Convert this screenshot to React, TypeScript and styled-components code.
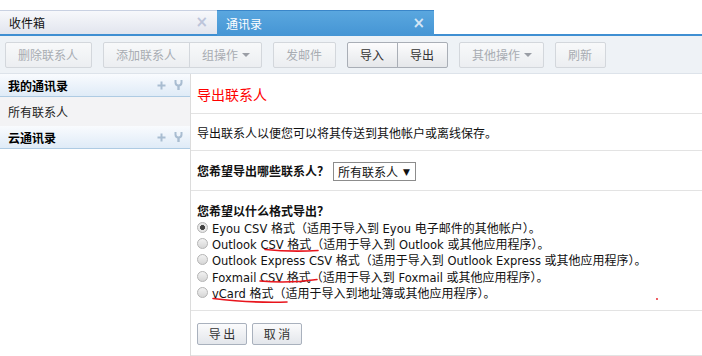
import styled, { createGlobalStyle } from "styled-components"

const GlobalStyle = createGlobalStyle`
    html, body {
        margin: 0;
        padding: 0;
        background: #ffffff;
    }
    body {
        font-family: "Noto Sans CJK SC", sans-serif;
        font-size: 12px;
        color: #333333;
    }
`

interface TabProps {
    $active?: boolean
}

interface BtnProps {
    $enabled?: boolean
    $first?: boolean
    $last?: boolean
}

interface Format {
    name: string
    target?: string
    rest: string
}

const formats: Format[] = [
    { name: "Eyou CSV", target: "Eyou", rest: "电子邮件的其他帐户）。" },
    { name: "Outlook CSV", target: "Outlook", rest: "或其他应用程序）。" },
    { name: "Outlook Express CSV", target: "Outlook Express", rest: "或其他应用程序）。" },
    { name: "Foxmail CSV", target: "Foxmail", rest: "或其他应用程序）。" },
    { name: "vCard", rest: "地址簿或其他应用程序）。" },
]

function PlusIcon() {
    return (
        <svg width="9" height="9" viewBox="0 0 9 9">
            <path d="M4.5 0.5 V8.5 M0.5 4.5 H8.5" stroke="#a9bdd1" strokeWidth="2" fill="none" />
        </svg>
    )
}

function WrenchIcon() {
    return (
        <svg width="9" height="10" viewBox="0 0 9 10">
            <path d="M1.5 0 V2.5 A3 3 0 0 0 7.5 2.5 V0" stroke="#a9bdd1" strokeWidth="2" fill="none" />
            <path d="M4.5 5 V10" stroke="#a9bdd1" strokeWidth="2.4" fill="none" />
        </svg>
    )
}

function GroupHeader({ title }: { title: string }) {
    return (
        <SideHeader>
            <span>{title}</span>
            <HeaderIcons>
                <PlusIcon />
                <WrenchIcon />
            </HeaderIcons>
        </SideHeader>
    )
}

function App() {
    return (
        <>
            <GlobalStyle />
            <Page>
                <TabBar>
                    <Tab>
                        收件箱<Close>×</Close>
                    </Tab>
                    <Tab $active>
                        通讯录<Close $active>×</Close>
                    </Tab>
                </TabBar>

                <Toolbar>
                    <Btn $first $last>删除联系人</Btn>
                    <Group>
                        <Btn $first>添加联系人</Btn>
                        <MenuBtn $last>
                            组操作<Caret />
                        </MenuBtn>
                    </Group>
                    <Btn $first $last>发邮件</Btn>
                    <Group>
                        <Btn $enabled $first>导入</Btn>
                        <Btn $enabled $last>导出</Btn>
                    </Group>
                    <MenuBtn $first $last>
                        其他操作<Caret />
                    </MenuBtn>
                    <Btn $first $last>刷新</Btn>
                </Toolbar>

                <Body>
                    <Sidebar>
                        <GroupHeader title="我的通讯录" />
                        <SideItem>所有联系人</SideItem>
                        <GroupHeader title="云通讯录" />
                    </Sidebar>

                    <Main>
                        <TitleSection>导出联系人</TitleSection>
                        <DescSection>导出联系人以便您可以将其传送到其他帐户或离线保存。</DescSection>
                        <PickSection>
                            <Label>您希望导出哪些联系人？</Label>
                            <Select>
                                所有联系人<SelectArrow>▼</SelectArrow>
                            </Select>
                        </PickSection>
                        <FormatSection>
                            <Label>您希望以什么格式导出？</Label>
                            {formats.map((f, i) => (
                                <Option key={f.name}>
                                    <Radio $checked={i === 0} />
                                    <span>
                                        <Latin>{f.name} </Latin>
                                        格式（适用于导入到
                                        {f.target && <Latin> {f.target} </Latin>}
                                        {f.rest}
                                    </span>
                                </Option>
                            ))}
                        </FormatSection>
                        <ActionSection>
                            <ActionBtn>导 出</ActionBtn>
                            <ActionBtn>取 消</ActionBtn>
                        </ActionSection>
                    </Main>
                </Body>

                <Marks width="702" height="356" viewBox="0 0 702 356">
                    <path d="M265 249.5 C280 251, 300 251.5, 318 250.5" stroke="#e8141c" strokeWidth="1.6" fill="none" strokeLinecap="round" />
                    <path d="M260 281 C276 282.5, 300 282, 317 279.5" stroke="#e8141c" strokeWidth="1.6" fill="none" strokeLinecap="round" />
                    <path d="M213 298.5 C235 301, 262 303, 287 302" stroke="#e8141c" strokeWidth="1.6" fill="none" strokeLinecap="round" />
                    <circle cx="657" cy="299" r="0.9" fill="#e8141c" />
                </Marks>
            </Page>
        </>
    )
}

export default App

const Page = styled.div`
    position: relative;
    width: 702px;
    height: 356px;
    overflow: hidden;
    background: #ffffff;
`

const TabBar = styled.div`
    height: 24px;
    padding-top: 10px;
    display: flex;
    align-items: stretch;
    border-bottom: 2px solid #3f8fd2;
`

const Tab = styled.div<TabProps>`
    width: 217px;
    box-sizing: border-box;
    display: flex;
    align-items: center;
    justify-content: space-between;
    padding: 0 9px;
    font-size: 12px;
    border-top: 1px solid ${(p) => (p.$active ? "#3a86c9" : "#c9d1e2")};
    color: ${(p) => (p.$active ? "#ffffff" : "#111111")};
    background: ${(p) =>
        p.$active
            ? "linear-gradient(#5aa7df, #4595d4)"
            : "linear-gradient(#f7f8fb, #e2e5ee)"};
    margin-bottom: ${(p) => (p.$active ? "-2px" : "0")};
`

const Close = styled.span<TabProps>`
    font-size: 15px;
    font-weight: bold;
    font-family: "DejaVu Sans", sans-serif;
    line-height: 1;
    color: ${(p) => (p.$active ? "#d5e6f5" : "#bcc4da")};
`

const Toolbar = styled.div`
    height: 37px;
    display: flex;
    align-items: center;
    gap: 11px;
    padding-left: 5px;
    background: #eef2f6;
    border-bottom: 1px solid #dde3ea;
`

const Group = styled.div`
    display: flex;
`

const Btn = styled.div<BtnProps>`
    height: 24px;
    padding: 0 13px 0 12px;
    display: flex;
    align-items: center;
    gap: 4px;
    font-size: 12px;
    color: ${(p) => (p.$enabled ? "#333333" : "#a8acb2")};
    border: 1px solid ${(p) => (p.$enabled ? "#a9aeb6" : "#d3d7dc")};
    background: ${(p) =>
        p.$enabled
            ? "linear-gradient(#fcfcfd, #e5e7ea)"
            : "linear-gradient(#f8f9fa, #eceef1)"};
    border-radius: ${(p) =>
        `${p.$first ? "2px" : "0"} ${p.$last ? "2px" : "0"} ${p.$last ? "2px" : "0"} ${p.$first ? "2px" : "0"}`};
    margin-left: ${(p) => (p.$first ? "0" : "-1px")};
`

const MenuBtn = styled(Btn)`
    padding: 0 11px 0 12px;
`

const Caret = styled.span`
    width: 0;
    height: 0;
    border-left: 4px solid transparent;
    border-right: 4px solid transparent;
    border-top: 4px solid #9a9ea5;
`

const Body = styled.div`
    display: flex;
    height: 282px;
`

const Sidebar = styled.div`
    width: 190px;
    border-right: 1px solid #dcdcdc;
`

const SideHeader = styled.div`
    height: 22px;
    display: flex;
    align-items: center;
    justify-content: space-between;
    padding: 0 8px;
    font-weight: bold;
    color: #000000;
    background: linear-gradient(#f9fbfe, #dfebf7);
    border-bottom: 1px solid #aecbe3;
`

const HeaderIcons = styled.div`
    display: flex;
    align-items: center;
    gap: 8px;
    margin-right: -1px;
`

const SideItem = styled.div`
    height: 29px;
    display: flex;
    align-items: center;
    padding-left: 8px;
    color: #222222;
    background: #f3f3f5;
`

const Main = styled.div`
    flex: 1;
`

const Section = styled.div`
    padding-left: 6px;
    border-bottom: 1px solid #e3e3e3;
`

const TitleSection = styled(Section)`
    height: 38px;
    display: flex;
    align-items: center;
    font-size: 14px;
    color: #ff0000;
    padding-top: 1px;
`

const DescSection = styled(Section)`
    height: 36px;
    display: flex;
    align-items: center;
    color: #111111;
`

const PickSection = styled(Section)`
    height: 39px;
    display: flex;
    align-items: center;
    gap: 4px;
`

const Label = styled.div`
    font-weight: bold;
    color: #111111;
    line-height: 16px;
`

const Select = styled.div`
    width: 83px;
    height: 19px;
    box-sizing: border-box;
    border: 1px solid #8c8c8c;
    display: flex;
    align-items: center;
    justify-content: space-between;
    padding: 0 5px 0 4px;
    color: #111111;
    margin-top: 2px;
`

const SelectArrow = styled.span`
    font-size: 9px;
    font-family: "DejaVu Sans", sans-serif;
    color: #111111;
`

const FormatSection = styled(Section)`
    padding-top: 12px;
    padding-bottom: 10px;
`

const Option = styled.div`
    height: 16.3px;
    display: flex;
    align-items: center;
    gap: 4px;
    color: #111111;
    white-space: pre;
`

const Latin = styled.span`
    font-family: "DejaVu Sans", sans-serif;
    font-size: 11.5px;
`

const Radio = styled.span<{ $checked?: boolean }>`
    width: 11px;
    height: 11px;
    border-radius: 50%;
    box-sizing: border-box;
    border: 1px solid #b4b4b4;
    background: ${(p) =>
        p.$checked
            ? "radial-gradient(circle, #444 0 2.2px, #e6e6e6 2.8px)"
            : "linear-gradient(#f2f2f2, #d6d6d6)"};
    flex-shrink: 0;
`

const ActionSection = styled(Section)`
    height: 43px;
    display: flex;
    align-items: center;
    gap: 5px;
    padding-top: 1px;
`

const ActionBtn = styled.div`
    width: 50px;
    height: 22px;
    box-sizing: border-box;
    display: flex;
    align-items: center;
    justify-content: center;
    color: #333333;
    border: 1px solid #a9b1bd;
    border-radius: 2px;
    background: linear-gradient(#fbfbfc, #e3e6eb);
`

const Marks = styled.svg`
    position: absolute;
    left: 0;
    top: 0;
    pointer-events: none;
`
